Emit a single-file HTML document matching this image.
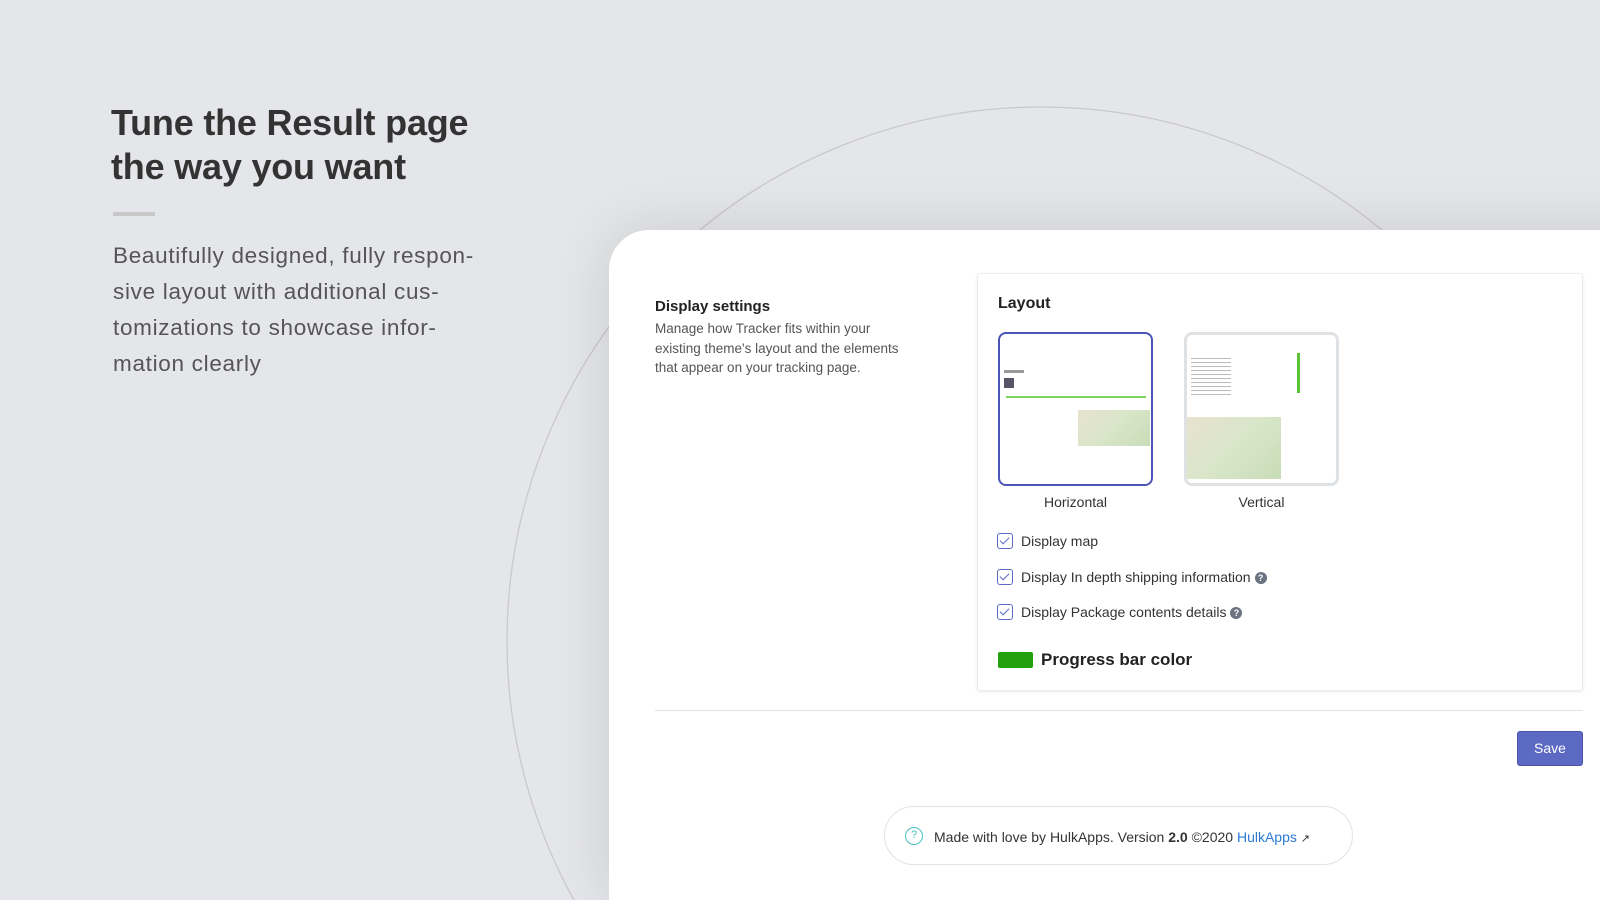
<!DOCTYPE html>
<html style="width:1600px;height:900px;overflow:hidden"><head><style>
*{margin:0;padding:0;box-sizing:border-box}
body{width:1600px;height:900px;overflow:hidden;background:#e5e6e9;font-family:"Liberation Sans",sans-serif;position:relative;color:#333}
.a{position:absolute}
h1{position:absolute;left:111px;top:101px;font-size:36px;line-height:44px;font-weight:bold;color:#333;letter-spacing:-0.2px}
.p{left:113px;top:238px;font-size:22.5px;line-height:36px;color:#555;width:480px;letter-spacing:0.7px}
.card{left:609px;top:230px;width:1100px;height:670px;background:#fff;border-radius:40px 0 0 0;box-shadow:0 0 60px rgba(0,0,0,0.12)}
.sm{font-size:13.5px;color:#555;line-height:19.5px}
.cb{position:absolute;left:997px;width:16px;height:16px;border:1.5px solid #5c6ac4;border-radius:3px}
.cb:after{content:"";position:absolute;left:4px;top:1px;width:4px;height:8px;border:solid #5c6ac4;border-width:0 1.5px 1.5px 0;transform:rotate(45deg)}
.ct{position:absolute;left:1021px;font-size:14px;color:#333}
.q{display:inline-block;width:12px;height:12px;border-radius:50%;background:#6b7280;color:#fff;font-size:9px;text-align:center;line-height:12px;font-weight:bold;vertical-align:middle;margin-left:4px}
.th{position:absolute;top:332px;width:155px;height:154px;border-radius:8px;background:#fff;overflow:hidden}
.map{position:absolute;background:linear-gradient(135deg,#e8e2cf,#d9e6c9 50%,#c8dcb8);}
</style></head><body>
<svg class="a" style="left:0;top:0" width="1600" height="900"><circle cx="1041" cy="641" r="534" fill="none" stroke="#c9c9cc" stroke-width="1.3"/></svg>
<h1>Tune the Result page<br>the way you want</h1>
<div class="a" style="left:113px;top:212px;width:42px;height:4px;background:#c8c8c8"></div>
<div class="a p">Beautifully designed, fully respon-<br>sive layout with additional cus-<br>tomizations to showcase infor-<br>mation clearly</div>
<div class="a card"></div>
<div class="a" style="left:655px;top:298px;font-size:15px;font-weight:bold;color:#222">Display settings</div>
<div class="a sm" style="left:655px;top:319px">Manage how Tracker fits within your<br>existing theme's layout and the elements<br>that appear on your tracking page.</div>
<div class="a" style="left:977px;top:273px;width:606px;height:418px;border:1px solid #ececec;box-shadow:0 1px 3px rgba(0,0,0,0.08);border-radius:3px"></div>
<div class="a" style="left:998px;top:295px;font-size:16px;font-weight:bold;color:#222">Layout</div>
<div class="th" style="left:998px;border:2px solid #4b55b8">
 <div class="a" style="left:4px;top:36px;width:20px;height:3px;background:#999"></div>
 <div class="a" style="left:4px;top:44px;width:10px;height:10px;background:#556"></div>
 <div class="a" style="left:6px;top:62px;width:140px;height:2px;background:#7dd35f"></div>
 <div class="a map" style="left:78px;top:76px;width:72px;height:36px"></div>
</div>
<div class="th" style="left:1184px;border:3px solid #dfe2e5">
 <div class="a" style="left:4px;top:20px;width:40px;height:40px;background:repeating-linear-gradient(#fff 0 3px,#bbb 3px 4px)"></div>
 <div class="a" style="left:110px;top:18px;width:3px;height:40px;background:#5bc236"></div>
 <div class="a map" style="left:0;top:82px;width:94px;height:62px"></div>
</div>
<div class="a" style="left:998px;top:494px;width:155px;text-align:center;font-size:14px">Horizontal</div>
<div class="a" style="left:1184px;top:494px;width:155px;text-align:center;font-size:14px">Vertical</div>
<div class="cb" style="top:533px"></div><div class="ct" style="top:533px">Display map</div>
<div class="cb" style="top:569px"></div><div class="ct" style="top:569px">Display In depth shipping information<span class="q">?</span></div>
<div class="cb" style="top:604px"></div><div class="ct" style="top:604px">Display Package contents details<span class="q">?</span></div>
<div class="a" style="left:998px;top:652px;width:35px;height:16px;background:#22a00d;border-radius:2px"></div>
<div class="a" style="left:1041px;top:650px;font-size:17px;font-weight:bold;color:#222">Progress bar color</div>
<div class="a" style="left:655px;top:710px;width:928px;height:1px;background:#e3e3e3"></div>
<div class="a" style="left:1517px;top:731px;width:66px;height:35px;background:#5c6ac4;border:1px solid #4a55a8;border-radius:3px;color:#fff;font-size:14px;text-align:center;line-height:33px">Save</div>
<div class="a" style="left:884px;top:806px;width:469px;height:59px;border:1px solid #e3e3e3;border-radius:30px"></div>
<div class="a" style="left:905px;top:827px;width:18px;height:18px;border:1.5px solid #47c1bf;border-radius:50%;color:#47c1bf;font-size:11px;text-align:center;line-height:15px">?</div>
<div class="a" style="left:934px;top:829px;font-size:14px;color:#333">Made with love by HulkApps. Version <b>2.0</b> ©2020 <span style="color:#2c7ad6">HulkApps</span> <span style="font-size:11px">&#x2197;</span></div>
</body></html>
